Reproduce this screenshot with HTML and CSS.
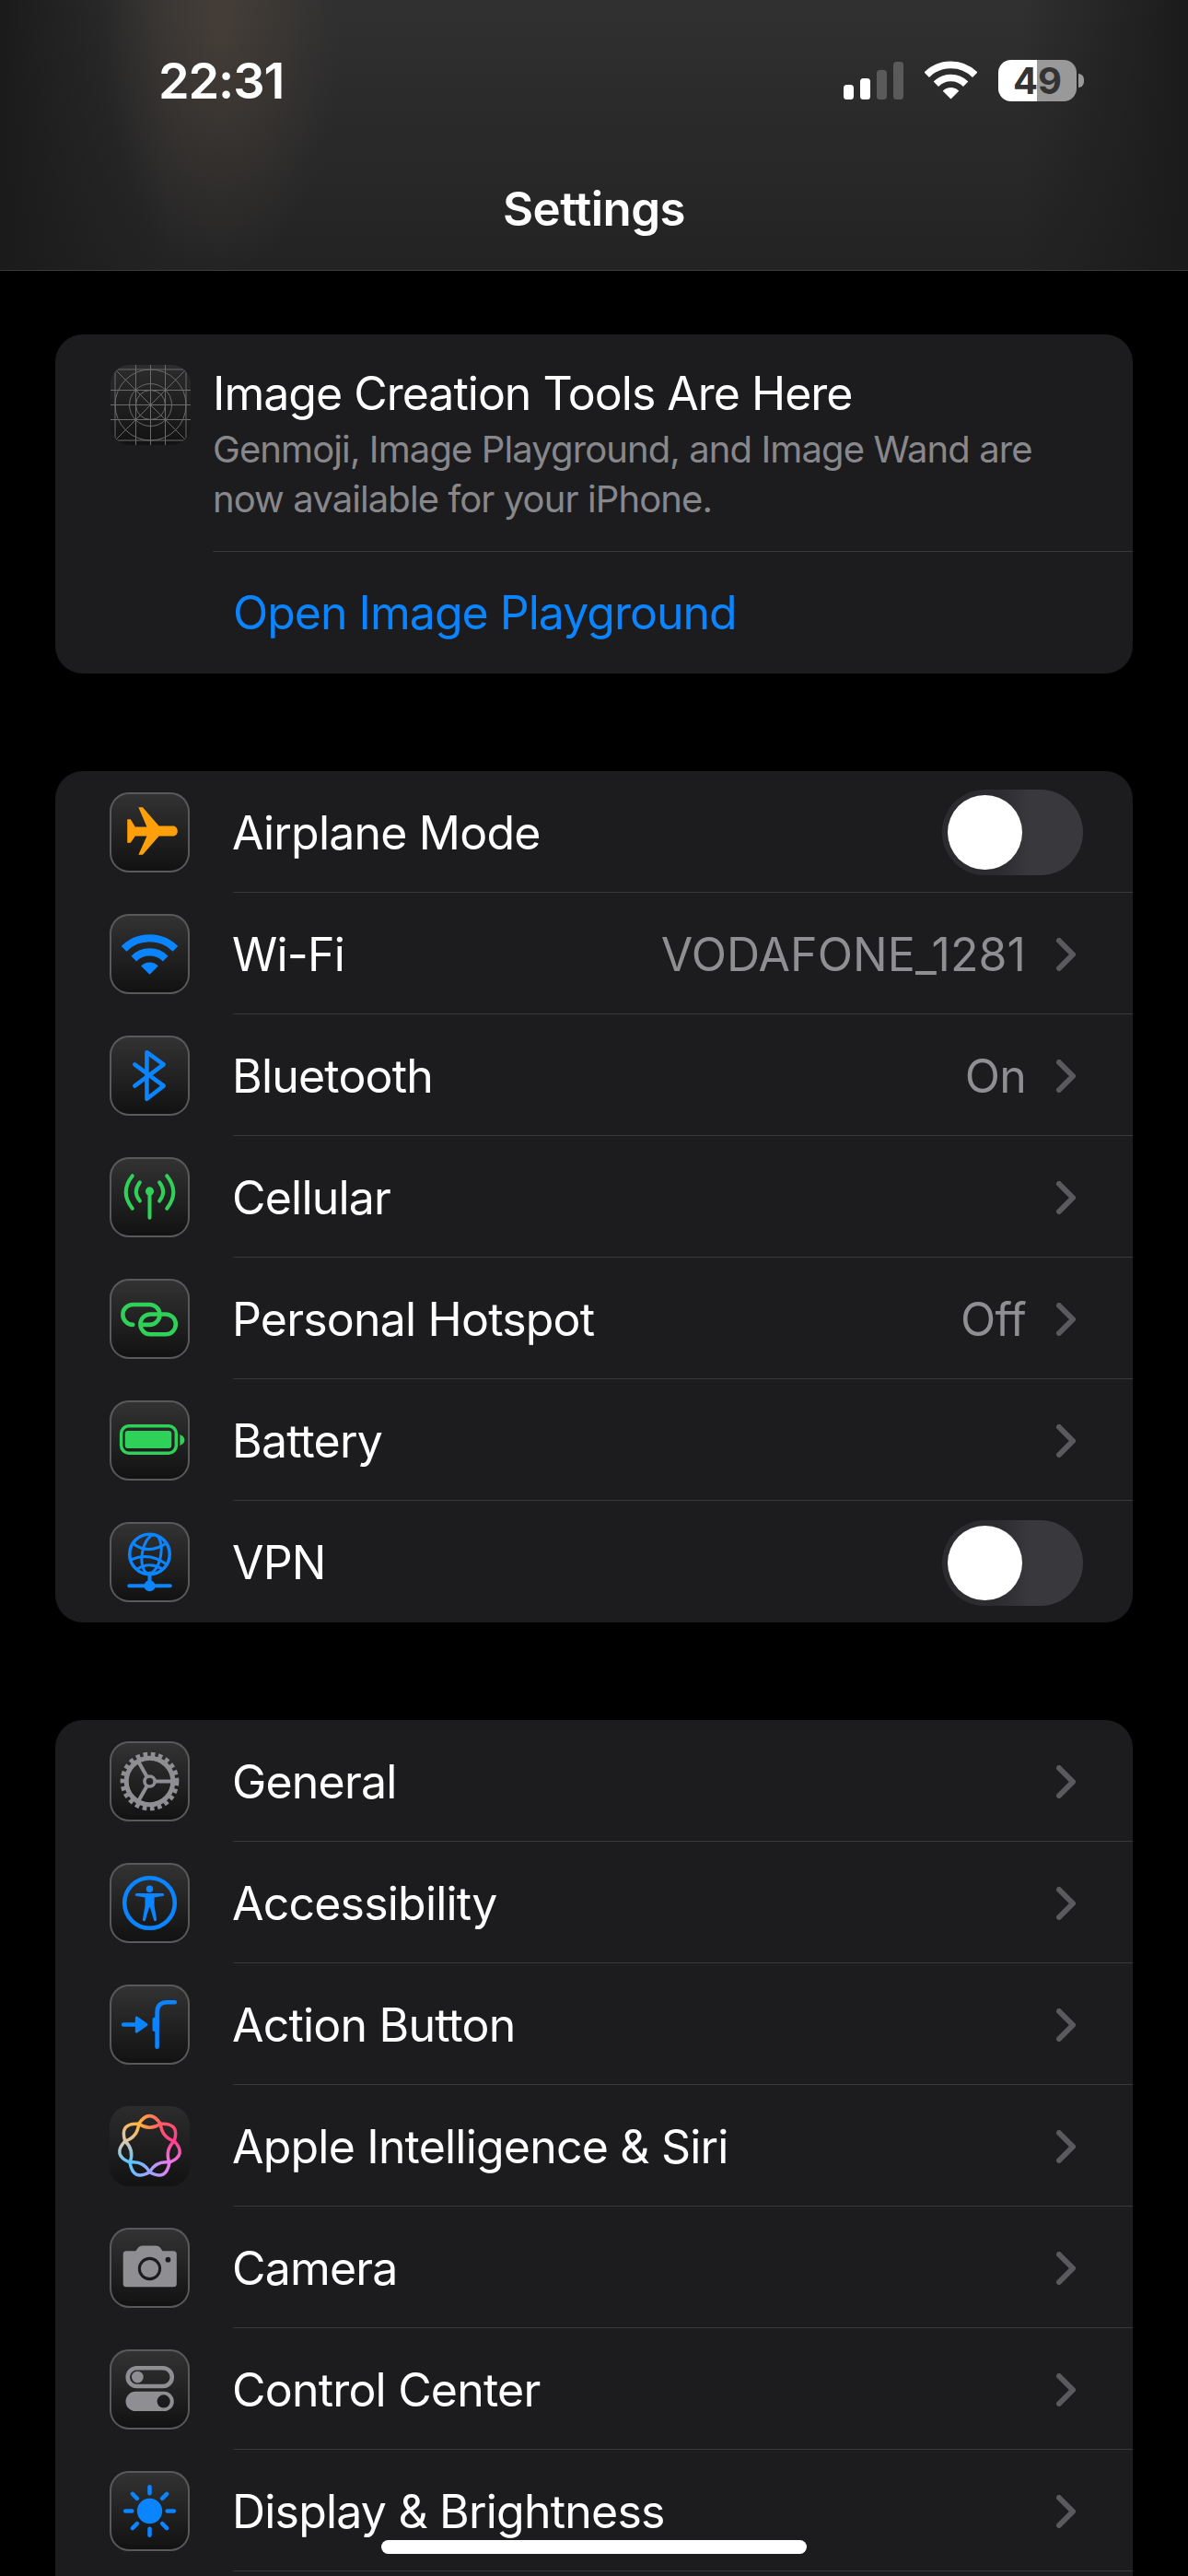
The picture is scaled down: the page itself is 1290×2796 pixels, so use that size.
FILE: index.html
```html
<!DOCTYPE html>
<html lang="en">
<head>
    <meta charset="UTF-8">
    <meta name="viewport" content="width=device-width, initial-scale=1.0">
    <title>Settings</title>
    <link rel="stylesheet" href="styles.css">
</head>
<body>
    <header class="top-bar">
        <div class="status-bar">
            <div class="time">22:31</div>
            <div class="status-icons">
                <svg width="65" height="41" viewBox="0 0 65 41">
                    <rect x="0" y="25" width="11" height="16" rx="3.5" fill="#fff"/>
                    <rect x="18" y="18" width="11" height="23" rx="3.5" fill="#fff"/>
                    <rect x="36" y="9" width="11" height="32" rx="3.5" fill="#5a5a5b"/>
                    <rect x="54" y="0" width="11" height="41" rx="3.5" fill="#5a5a5b"/>
                </svg>
                <svg width="57" height="42" viewBox="13 22 60 43">
                    <path d="M15.4 37.4A39 39 0 0 1 70.6 37.4M26 48A24 24 0 0 1 60 48" fill="none" stroke="#fff" stroke-width="8"/>
                    <path d="M43 65L33.8 55.8A13 13 0 0 1 52.2 55.8Z" fill="#fff"/>
                </svg>
                <div class="battery">49</div>
            </div>
        </div>
        <div class="page-title">Settings</div>
    </header>

    <main class="content">
        <section class="card">
            <div class="promo">
                <div class="icon icon-plain">
                    <svg viewBox="0 0 87 87" fill="none" stroke="#6b6b6d" stroke-width="1">
                        <rect x="5" y="5" width="77" height="77"/>
                        <path d="M27.5 0V87M43.5 0V87M59.5 0V87M0 27.5H87M0 43.5H87M0 59.5H87M5 5L82 82M82 5L5 82"/>
                        <circle cx="43.5" cy="43.5" r="38.5"/>
                        <circle cx="43.5" cy="43.5" r="23"/>
                        <circle cx="43.5" cy="43.5" r="16"/>
                    </svg>
                </div>
                <div class="promo-text">
                    <div class="promo-title">Image Creation Tools Are Here</div>
                    <div class="promo-desc">Genmoji, Image Playground, and Image Wand are<br>now available for your iPhone.</div>
                </div>
            </div>
            <div class="promo-link">Open Image Playground</div>
        </section>

        <section class="card">
            <div class="row">
                <div class="icon">
                    <svg viewBox="0 0 86 86">
                        <path fill="#ff9f0a" d="M31 16h4.500L53 36h15c3 0 5 2.500 5 5.500s-2 5.500-5 5.500H53L35.500 67H31l9-20H27.500L22.500 54H19V29h3.500l5 8H40z"/>
                    </svg>
                </div>
                <div class="row-body">
                    <span class="row-label">Airplane Mode</span>
                    <div class="toggle"><div class="knob"></div></div>
                </div>
            </div>
            <div class="row">
                <div class="icon">
                    <svg viewBox="0 0 86 86">
                        <path d="M15.400 37.400A39 39 0 0 1 70.600 37.400M26 48A24 24 0 0 1 60 48" fill="none" stroke="#0a84ff" stroke-width="8"/>
                        <path d="M43 65L33.800 55.800A13 13 0 0 1 52.200 55.800Z" fill="#0a84ff"/>
                    </svg>
                </div>
                <div class="row-body">
                    <span class="row-label">Wi-Fi</span>
                    <span class="row-value row-value-caps">VODAFONE_1281</span>
                    <svg class="chevron" viewBox="0 0 21 36"><path d="M3 3L18 18L3 33"/></svg>
                </div>
            </div>
            <div class="row">
                <div class="icon">
                    <svg viewBox="0 0 86 86">
                        <path d="M27 31L58 54L40 68V18L58 31L27 54" fill="none" stroke="#0a84ff" stroke-width="4.500" stroke-linecap="round" stroke-linejoin="round"/>
                    </svg>
                </div>
                <div class="row-body">
                    <span class="row-label">Bluetooth</span>
                    <span class="row-value">On</span>
                    <svg class="chevron" viewBox="0 0 21 36"><path d="M3 3L18 18L3 33"/></svg>
                </div>
            </div>
            <div class="row">
                <div class="icon">
                    <svg viewBox="0 0 86 86" fill="none" stroke="#30d158" stroke-width="4" stroke-linecap="round">
                        <path d="M24.500 20Q10.500 37.500 24.500 55M32.500 27Q24.500 37.500 32.500 47M61.500 20Q75.500 37.500 61.500 55M53.500 27Q61.500 37.500 53.500 47M43 37V65"/>
                        <circle cx="43" cy="36.500" r="4.500" fill="#30d158" stroke="none"/>
                    </svg>
                </div>
                <div class="row-body">
                    <span class="row-label">Cellular</span>
                    <svg class="chevron" viewBox="0 0 21 36"><path d="M3 3L18 18L3 33"/></svg>
                </div>
            </div>
            <div class="row">
                <div class="icon">
                    <svg viewBox="0 0 86 86" fill="none" stroke="#30d158" stroke-width="4.500" stroke-linecap="round">
                        <path d="M25 49.300A10.800 10.800 0 0 1 25 27.700H43A10.800 10.800 0 0 1 43 49.300H35"/>
                        <rect x="33" y="38" width="38" height="21.500" rx="10.700"/>
                    </svg>
                </div>
                <div class="row-body">
                    <span class="row-label">Personal Hotspot</span>
                    <span class="row-value">Off</span>
                    <svg class="chevron" viewBox="0 0 21 36"><path d="M3 3L18 18L3 33"/></svg>
                </div>
            </div>
            <div class="row">
                <div class="icon">
                    <svg viewBox="0 0 86 86">
                        <rect x="12.500" y="27.500" width="59" height="29" rx="8" fill="none" stroke="#30d158" stroke-width="3.500"/>
                        <rect x="16.500" y="32.500" width="50" height="19" rx="3" fill="#30d158"/>
                        <path d="M75.500 36.500C79 38 80.500 40 80.500 42.500C80.500 45 79 47 75.500 48.500Z" fill="#30d158"/>
                    </svg>
                </div>
                <div class="row-body">
                    <span class="row-label">Battery</span>
                    <svg class="chevron" viewBox="0 0 21 36"><path d="M3 3L18 18L3 33"/></svg>
                </div>
            </div>
            <div class="row">
                <div class="icon">
                    <svg viewBox="0 0 86 86" fill="none" stroke="#0a84ff" stroke-width="3">
                        <circle cx="43" cy="34.500" r="21.500" stroke-width="3.500"/>
                        <ellipse cx="45" cy="34.500" rx="10" ry="21" transform="rotate(10 45 34.500)"/>
                        <path d="M25 23Q42 36 62 22M22 41Q42 31 62 46M29 51Q42 42 56 50"/>
                        <path d="M43 55V68M21 68.500H65" stroke-width="4" stroke-linecap="round"/>
                        <circle cx="43" cy="68.500" r="6" fill="#0a84ff" stroke="none"/>
                    </svg>
                </div>
                <div class="row-body">
                    <span class="row-label">VPN</span>
                    <div class="toggle"><div class="knob"></div></div>
                </div>
            </div>
        </section>

        <section class="card card-cut">
            <div class="row">
                <div class="icon">
                    <svg viewBox="0 0 86 86" fill="none" stroke="#8e8e93">
                        <circle cx="43" cy="43" r="25" stroke-width="5"/>
                        <circle cx="43" cy="43" r="28.500" stroke-width="6" stroke-dasharray="4.500 3.460"/>
                        <circle cx="43" cy="43" r="5.500" stroke-width="3.500"/>
                        <path d="M49 43H67M40 37.800L31 22M40 48.200L31 64" stroke-width="4"/>
                    </svg>
                </div>
                <div class="row-body">
                    <span class="row-label">General</span>
                    <svg class="chevron" viewBox="0 0 21 36"><path d="M3 3L18 18L3 33"/></svg>
                </div>
            </div>
            <div class="row">
                <div class="icon">
                    <svg viewBox="0 0 86 86">
                        <circle cx="43" cy="43" r="27" fill="none" stroke="#0a84ff" stroke-width="4.500"/>
                        <circle cx="43" cy="28" r="3.700" fill="#0a84ff"/>
                        <path fill="#0a84ff" d="M29 32.500H57a1.500 1.500 0 0 1 0 3L48 37V46L50.500 60.500a1.500 1.500 0 0 1-3 .7L43.500 48h-1L38.500 61.200a1.500 1.500 0 0 1-3-.7L38 46V37L29 35.500a1.500 1.500 0 0 1 0-3z"/>
                    </svg>
                </div>
                <div class="row-body">
                    <span class="row-label">Accessibility</span>
                    <svg class="chevron" viewBox="0 0 21 36"><path d="M3 3L18 18L3 33"/></svg>
                </div>
            </div>
            <div class="row">
                <div class="icon">
                    <svg viewBox="0 0 86 86">
                        <path d="M51 67V30Q51 19 62 19H70M15 43H30" fill="none" stroke="#0a84ff" stroke-width="4.500" stroke-linecap="round"/>
                        <path d="M29 35.500L39.500 43L29 50.500Z" fill="#0a84ff" stroke="#0a84ff" stroke-width="3" stroke-linejoin="round"/>
                        <rect x="46" y="35" width="7" height="15.500" rx="2.500" fill="#0a84ff"/>
                    </svg>
                </div>
                <div class="row-body">
                    <span class="row-label">Action Button</span>
                    <svg class="chevron" viewBox="0 0 21 36"><path d="M3 3L18 18L3 33"/></svg>
                </div>
            </div>
            <div class="row">
                <div class="icon icon-plain">
                    <svg viewBox="0 0 86 86" fill="none" stroke-width="3.500">
                        <defs>
                            <linearGradient id="petal1"><stop offset="0" stop-color="#ffb23c"/><stop offset="1" stop-color="#ff5a66"/></linearGradient>
                            <linearGradient id="petal2"><stop offset="0" stop-color="#ff5a66"/><stop offset="1" stop-color="#ff3d8a"/></linearGradient>
                            <linearGradient id="petal3"><stop offset="0" stop-color="#ff3d8a"/><stop offset="1" stop-color="#ee78ee"/></linearGradient>
                            <linearGradient id="petal4"><stop offset="0" stop-color="#ee78ee"/><stop offset="1" stop-color="#9ea4ff"/></linearGradient>
                            <linearGradient id="petal5"><stop offset="0" stop-color="#9ea4ff"/><stop offset="1" stop-color="#58c6ff"/></linearGradient>
                            <linearGradient id="petal6"><stop offset="0" stop-color="#58c6ff"/><stop offset="1" stop-color="#dcc8b0"/></linearGradient>
                            <linearGradient id="petal7"><stop offset="0" stop-color="#dcc8b0"/><stop offset="1" stop-color="#ffb23c"/></linearGradient>
                        </defs>
                        <g transform="translate(43 43.500)">
                            <path stroke="url(#petal1)" d="M-11.800-24.400Q0-41.600 11.800-24.400Q0-16.600-11.800-24.400Z"/>
                            <path stroke="url(#petal2)" transform="rotate(51.430)" d="M-11.800-24.400Q0-41.600 11.800-24.400Q0-16.600-11.800-24.400Z"/>
                            <path stroke="url(#petal3)" transform="rotate(102.860)" d="M-11.800-24.400Q0-41.600 11.800-24.400Q0-16.600-11.800-24.400Z"/>
                            <path stroke="url(#petal4)" transform="rotate(154.290)" d="M-11.800-24.400Q0-41.600 11.800-24.400Q0-16.600-11.800-24.400Z"/>
                            <path stroke="url(#petal5)" transform="rotate(205.710)" d="M-11.800-24.400Q0-41.600 11.800-24.400Q0-16.600-11.800-24.400Z"/>
                            <path stroke="url(#petal6)" transform="rotate(257.140)" d="M-11.800-24.400Q0-41.600 11.800-24.400Q0-16.600-11.800-24.400Z"/>
                            <path stroke="url(#petal7)" transform="rotate(308.570)" d="M-11.800-24.400Q0-41.600 11.800-24.400Q0-16.600-11.800-24.400Z"/>
                        </g>
                    </svg>
                </div>
                <div class="row-body">
                    <span class="row-label">Apple Intelligence &amp; Siri</span>
                    <svg class="chevron" viewBox="0 0 21 36"><path d="M3 3L18 18L3 33"/></svg>
                </div>
            </div>
            <div class="row">
                <div class="icon">
                    <svg viewBox="0 0 86 86">
                        <path fill="#8e8e93" d="M18 25H28L31 21Q32.500 19.300 35 19.300H50Q52.500 19.300 54 21L57 25H68.500Q72 25 72 28.500V60Q72 63.500 68.500 63.500H18Q14.500 63.500 14.500 60V28.500Q14.500 25 18 25Z"/>
                        <circle cx="43" cy="44" r="11" fill="none" stroke="#1c1c1e" stroke-width="3"/>
                        <circle cx="62.700" cy="34.300" r="2.800" fill="#1c1c1e"/>
                    </svg>
                </div>
                <div class="row-body">
                    <span class="row-label">Camera</span>
                    <svg class="chevron" viewBox="0 0 21 36"><path d="M3 3L18 18L3 33"/></svg>
                </div>
            </div>
            <div class="row">
                <div class="icon">
                    <svg viewBox="0 0 86 86">
                        <rect x="19.500" y="20" width="47.500" height="19.500" rx="9.700" fill="none" stroke="#8e8e93" stroke-width="4.500"/>
                        <circle cx="30" cy="29.700" r="6.300" fill="#8e8e93"/>
                        <rect x="17.300" y="45.300" width="51.700" height="21" rx="10.500" fill="#8e8e93"/>
                        <circle cx="58" cy="55.800" r="7" fill="#1c1c1e"/>
                    </svg>
                </div>
                <div class="row-body">
                    <span class="row-label">Control Center</span>
                    <svg class="chevron" viewBox="0 0 21 36"><path d="M3 3L18 18L3 33"/></svg>
                </div>
            </div>
            <div class="row">
                <div class="icon">
                    <svg viewBox="0 0 86 86">
                        <circle cx="43" cy="43" r="13.500" fill="#0a84ff"/>
                        <path d="M43 17V24M43 62V69M17 43H24M62 43H69M24.600 24.600L29.500 29.500M56.500 56.500L61.400 61.400M24.600 61.400L29.500 56.500M56.500 29.500L61.400 24.600" stroke="#0a84ff" stroke-width="4.500" stroke-linecap="round"/>
                    </svg>
                </div>
                <div class="row-body">
                    <span class="row-label">Display &amp; Brightness</span>
                    <svg class="chevron" viewBox="0 0 21 36"><path d="M3 3L18 18L3 33"/></svg>
                </div>
            </div>
        </section>
    </main>

    <div class="home-indicator"></div>
</body>
</html>
```

FILE: styles.css
```css
* { margin: 0; padding: 0; box-sizing: border-box; }
body {
    font-family: 'Inter', 'Liberation Sans', sans-serif;
    background: #000;
    color: #fff;
    height: 2796px;
    overflow: hidden;
}
.top-bar {
    height: 294px;
    padding-top: 64px;
    border-bottom: 1px solid #3a3a3c;
    background:
        radial-gradient(ellipse 130px 280px at 240px 20px, rgba(95, 80, 65, 0.45), transparent),
        linear-gradient(90deg, #1b1b1b, transparent 14%, transparent 86%, #1b1b1b),
        linear-gradient(#303031, #232324);
}
.status-bar {
    display: flex;
    justify-content: space-between;
    align-items: center;
    height: 45px;
    padding: 0 121px 0 172px;
}
.time {
    padding-top: 2px;
    font-size: 54px;
    font-weight: 600;
    letter-spacing: -1.100px;
}
.status-icons {
    display: flex;
    align-items: flex-end;
    gap: 23px;
}
.battery {
    position: relative;
    width: 85px;
    height: 45px;
    margin-bottom: -2px;
    border-radius: 14px;
    background: linear-gradient(90deg, #fff 49.500%, #999 49.500%);
    color: #333;
    font-size: 40px;
    font-weight: 700;
    line-height: 45px;
    text-align: center;
}
.battery::after {
    content: '';
    position: absolute;
    top: 15px;
    right: -8px;
    width: 6px;
    height: 15px;
    border-radius: 0 8px 8px 0;
    background: #999;
}
.page-title {
    margin-top: 88px;
    font-size: 51px;
    font-weight: 600;
    letter-spacing: -0.5px;
    line-height: 60px;
    text-align: center;
}
.content {
    display: flex;
    flex-direction: column;
    gap: 106px;
    padding: 69px 60px 0;
}
.card {
    background: #1c1c1e;
    border-radius: 30px;
    overflow: hidden;
}
.card-cut { padding-bottom: 40px; }
.icon {
    flex: none;
    width: 87px;
    height: 87px;
    border-radius: 21px;
    background: linear-gradient(#333334, #111);
    box-shadow: inset 0 0 0 2px #59595b;
}
.icon svg {
    display: block;
    width: 100%;
    height: 100%;
}
.icon-plain {
    background: linear-gradient(#2c2c2d, #121212);
    box-shadow: none;
    overflow: hidden;
}
.promo {
    display: flex;
    padding: 33px 0 0 60px;
}
.promo-text {
    flex: 1;
    height: 203px;
    margin-left: 24px;
    border-bottom: 1px solid #38383a;
}
.promo-title {
    padding-top: 1px;
    font-size: 50px;
    letter-spacing: -1px;
    line-height: 60px;
}
.promo-desc {
    margin-top: 4px;
    color: #88888c;
    font-size: 40px;
    letter-spacing: -0.9px;
    line-height: 53.500px;
}
.promo-link {
    height: 132px;
    padding-left: 193px;
    color: #0a84ff;
    font-size: 50px;
    letter-spacing: -1px;
    line-height: 132px;
}
.row {
    display: flex;
    align-items: center;
    height: 132px;
    padding-left: 59px;
}
.row-body {
    display: flex;
    align-items: center;
    flex: 1;
    height: 132px;
    margin-left: 47px;
    padding: 2px 54px 0 0;
    border-bottom: 1px solid #38383a;
}
.card:not(.card-cut) .row:last-child .row-body { border-bottom: none; }
.row-label {
    flex: 1;
    margin-left: -1px;
    font-size: 50px;
    letter-spacing: -0.8px;
}
.row-value {
    margin-right: 33px;
    color: #8e8e93;
    font-size: 50px;
    letter-spacing: -0.8px;
}
.row-value-caps { letter-spacing: 0.1px; }
.chevron {
    flex: none;
    width: 21px;
    height: 36px;
    margin-right: 8px;
    fill: none;
    stroke: #5a5a5e;
    stroke-width: 6px;
    stroke-linecap: round;
    stroke-linejoin: round;
}
.toggle {
    display: flex;
    align-items: center;
    width: 153px;
    height: 93px;
    padding: 0 6px;
    border-radius: 47px;
    background: linear-gradient(90deg, #2c2c30 40%, #39393d 62%);
}
.knob {
    width: 81px;
    height: 81px;
    border-radius: 50%;
    background: #fff;
}
.home-indicator {
    position: fixed;
    left: 414px;
    bottom: 24px;
    width: 462px;
    height: 15px;
    border-radius: 8px;
    background: #fff;
}
```
